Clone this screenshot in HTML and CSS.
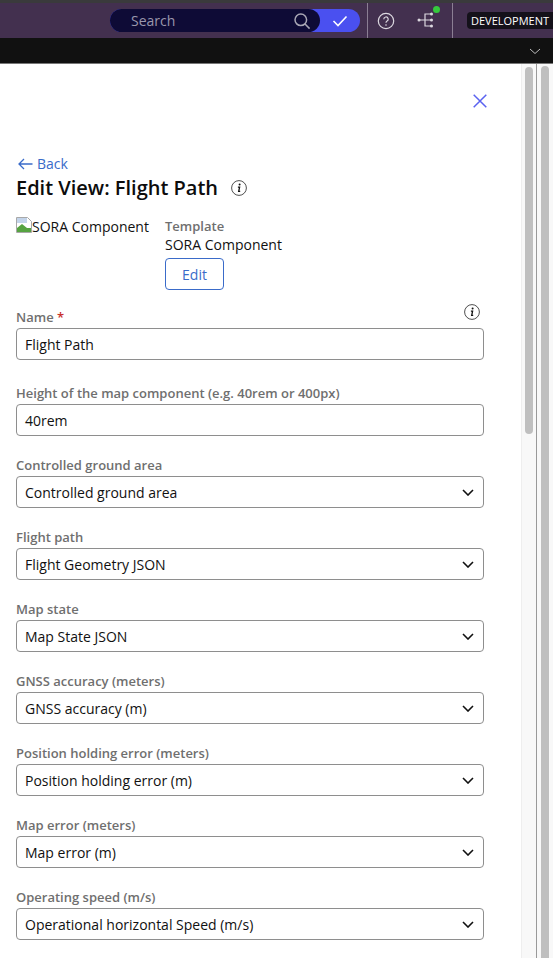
FILE: index.html
```html
<!DOCTYPE html>
<html lang="en">
<head>
<meta charset="utf-8">
<title>Edit View: Flight Path</title>
<link rel="stylesheet" href="styles.css">
</head>
<body>
<header class="topbar">
  <div class="search-group">
    <div class="search"><span class="search-text">Search</span>
      <svg class="search-icon" viewBox="0 0 18 18" width="18" height="18"><circle cx="7.8" cy="7.8" r="5.8"/><path d="M12 12l4.6 4.6"/></svg>
    </div>
    <div class="search-check"><svg viewBox="0 0 16 12" width="16" height="12"><path d="M1.5 6l4.5 4.5 8.500-9"/></svg></div>
  </div>
  <div class="tool tool-help">
    <svg viewBox="0 0 18 18" width="18" height="18"><circle cx="9" cy="9" r="7.700"/><path d="M6.800 7.200a2.200 2.200 0 1 1 3.300 1.900c-.7.400-1.100.8-1.100 1.700"/><circle class="dot" cx="9" cy="13" r=".8"/></svg>
  </div>
  <div class="tool tool-tree">
    <svg viewBox="0 0 18 18" width="18" height="18"><path d="M2 9h6M14 3H8v12h6M8 9h6"/><circle class="dot" cx="2" cy="9" r="1.500"/><circle class="dot" cx="14.500" cy="3" r="1.500"/><circle class="dot" cx="14.500" cy="9" r="1.500"/><circle class="dot" cx="14.500" cy="15" r="1.500"/></svg>
    <span class="status-dot"></span>
  </div>
  <div class="env"><span class="env-badge">DEVELOPMENT</span></div>
</header>
<div class="subbar">
  <svg viewBox="0 0 12 7" width="12" height="7"><path d="M1 1l5 4.500L11 1"/></svg>
</div>
<div class="workspace">
  <main class="panel">
    <div class="close-row"><svg viewBox="0 0 14 14" width="14" height="14"><path d="M.7.7l12.600 12.600M13.300.7L.7 13.300"/></svg></div>
    <a class="back"><svg viewBox="0 0 15 12" width="15" height="12"><path d="M14.500 6H1M6 1L1 6l5 5"/></svg>Back</a>
    <div class="title-row">
      <h1>Edit View: Flight Path</h1>
      <svg class="info" viewBox="0 0 16 16" width="16" height="16"><circle cx="8" cy="8" r="7.400"/><circle class="dot" cx="8.600" cy="4.600" r="1"/><path class="i" d="M6.900 7.100h1.700L7.700 11.300h1.500"/></svg>
    </div>
    <div class="template">
      <div class="thumb">
        <svg class="broken" viewBox="0 0 16 16" width="16" height="16"><path class="b1" d="M.5.500h11l4 4v11H.5z"/><path class="b2" d="M1 1h10v5H1z"/><path class="b3" d="M1 15V11l5-4 5 4 4 0v4z"/></svg><span>SORA Component</span>
      </div>
      <div class="template-info">
        <div class="label">Template</div>
        <div class="template-name">SORA Component</div>
        <button class="edit">Edit</button>
      </div>
    </div>
    <div class="field field-name">
      <div class="label-row">
        <label class="label">Name <span class="req">*</span></label>
        <svg class="info" viewBox="0 0 16 16" width="16" height="16"><circle cx="8" cy="8" r="7.400"/><circle class="dot" cx="8.600" cy="4.600" r="1"/><path class="i" d="M6.900 7.100h1.700L7.700 11.300h1.500"/></svg>
      </div>
      <div class="control">Flight Path</div>
    </div>
    <div class="field field-height">
      <label class="label">Height of the map component (e.g. 40rem or 400px)</label>
      <div class="control">40rem</div>
    </div>
    <div class="field">
      <label class="label">Controlled ground area</label>
      <div class="control select">Controlled ground area<svg viewBox="0 0 12 7" width="12" height="7"><path d="M1 1l5 5 5-5"/></svg></div>
    </div>
    <div class="field">
      <label class="label">Flight path</label>
      <div class="control select">Flight Geometry JSON<svg viewBox="0 0 12 7" width="12" height="7"><path d="M1 1l5 5 5-5"/></svg></div>
    </div>
    <div class="field">
      <label class="label">Map state</label>
      <div class="control select">Map State JSON<svg viewBox="0 0 12 7" width="12" height="7"><path d="M1 1l5 5 5-5"/></svg></div>
    </div>
    <div class="field">
      <label class="label">GNSS accuracy (meters)</label>
      <div class="control select">GNSS accuracy (m)<svg viewBox="0 0 12 7" width="12" height="7"><path d="M1 1l5 5 5-5"/></svg></div>
    </div>
    <div class="field">
      <label class="label">Position holding error (meters)</label>
      <div class="control select">Position holding error (m)<svg viewBox="0 0 12 7" width="12" height="7"><path d="M1 1l5 5 5-5"/></svg></div>
    </div>
    <div class="field">
      <label class="label">Map error (meters)</label>
      <div class="control select">Map error (m)<svg viewBox="0 0 12 7" width="12" height="7"><path d="M1 1l5 5 5-5"/></svg></div>
    </div>
    <div class="field">
      <label class="label">Operating speed (m/s)</label>
      <div class="control select">Operational horizontal Speed (m/s)<svg viewBox="0 0 12 7" width="12" height="7"><path d="M1 1l5 5 5-5"/></svg></div>
    </div>
  </main>
  <div class="track track-inner"><div class="bar bar-inner"></div></div>
  <div class="track track-outer"><div class="bar bar-outer"></div></div>
</div>
</body>
</html>
```
FILE: styles.css
```css
* { box-sizing: border-box; }
html, body { margin: 0; height: 100%; overflow: hidden; }
body { display: flex; flex-direction: column; font-family: "Open Sans", sans-serif; color: #111; background: #fff; }

.topbar { flex: 0 0 38px; display: flex; align-items: stretch; background: #43304f; border-top: 3px solid #3a3a3c; }
.search-group { display: flex; align-items: center; margin-left: 110px; width: 250px; height: 23px; margin-top: 6px; background: #4a50f0; border-radius: 12px; }
.search { width: 210px; height: 23px; display: flex; align-items: center; justify-content: space-between; padding: 0 9px 0 21px; background: #0e0b36; border-radius: 12px; }
.search-text { font-size: 14px; color: #9a97ad; }
.search-icon { fill: none; stroke: #a9a7b5; stroke-width: 1.500; }
.search-check { flex: 1; display: flex; justify-content: center; }
.search-check svg { fill: none; stroke: #fff; stroke-width: 1.600; }
.tool { position: relative; display: flex; align-items: center; justify-content: center; }
.tool svg { fill: none; stroke: #dcd8e0; stroke-width: 1.200; }
.tool .dot { fill: #dcd8e0; stroke: none; }
.tool-help { margin-left: 7px; width: 36px; border-left: 1px solid #8b7f94; }
.tool-tree { width: 49px; padding-right: 3px; padding-bottom: 1px; }
.status-dot { position: absolute; top: 3px; left: 30px; width: 7px; height: 7px; border-radius: 50%; background: #35c93d; }
.env { flex: 1; display: flex; align-items: center; padding-left: 14px; border-left: 1px solid #8b7f94; }
.env-badge { flex: 1; height: 17px; line-height: 17px; background: #14111a; color: #fff; font-size: 11px; padding-left: 4px; border-radius: 4px 0 0 4px; white-space: nowrap; overflow: hidden; }

.subbar { flex: 0 0 26px; display: flex; align-items: center; justify-content: flex-end; padding: 2px 12px 0 0; background: #111; border-bottom: 1px solid #777; }
.subbar svg { fill: none; stroke: #bbb; stroke-width: 1; }

.workspace { flex: 1; min-height: 0; display: flex; }
.panel { width: 521px; flex: none; padding: 0 37px 0 16px; overflow: hidden; }
.close-row { display: flex; justify-content: flex-end; padding: 30px 0 0; margin-right: -3px; height: 90px; }
.close-row svg { fill: none; stroke: #5a62f0; stroke-width: 1.500; }
.back { display: flex; align-items: center; gap: 4px; font-size: 14px; line-height: 19px; color: #3a6bc9; margin-left: 2px; }
.back svg { fill: none; stroke: #3a6bc9; stroke-width: 1.300; }
.title-row { display: flex; align-items: center; gap: 13px; margin-top: 1px; height: 27px; }
h1 { margin: 0; font-size: 20px; font-weight: 600; line-height: 27px; color: #0c0c0c; }
.info { flex: none; fill: none; stroke: #222; stroke-width: .8; }
.info .dot { fill: #111; stroke: none; }
.info .i { stroke: #111; stroke-width: 1.300; }

.template { display: flex; gap: 16px; margin-top: 16px; }
.thumb { width: 133px; height: 20px; display: flex; font-size: 14px; line-height: 20px; color: #111; white-space: nowrap; }
.broken { flex: none; }
.b1 { fill: #fff; stroke: #a8a8a8; }
.b2 { fill: #c3d4ea; }
.b3 { fill: #56a341; }
.template-info { padding-top: 1px; }
.template-name { font-size: 14px; line-height: 19px; }
.label { display: block; font-size: 13px; font-weight: 600; line-height: 17px; color: #6f6f6f; }
.edit { display: block; margin-top: 4px; width: 59px; height: 32px; padding: 0; background: #fff; border: 1px solid #3a6bc9; border-radius: 4px; color: #3a6bc9; font: 14px "Open Sans", sans-serif; }

.field { margin-top: 21px; }
.field .label { margin-bottom: 2px; }
.field-name { margin-top: 19px; }
.field-height { margin-top: 25px; }
.label-row { display: flex; justify-content: space-between; align-items: flex-start; }
.label-row .info { margin: -5px 4px 0 0; }
.req { color: #c9302c; }
.control { height: 32px; border: 1px solid #8e8e8e; border-radius: 4px; padding: 0 8px; display: flex; align-items: center; justify-content: space-between; font-size: 14px; color: #111; background: #fff; }
.select svg { fill: none; stroke: #111; stroke-width: 1.600; margin-right: 1px; }

.track { background: #f8f8f8; flex: none; display: flex; justify-content: center; }
.track-inner { width: 16px; padding-top: 3px; border-left: 1px solid #eee; border-right: 1px solid #999; }
.track-outer { flex: 1; padding-top: 2px; }
.bar { width: 8px; background: #bfbfbf; border-radius: 4px 4px 0 0; }
.bar-inner { height: 367px; border-radius: 4px; }
.bar-outer { height: 100%; }
```
